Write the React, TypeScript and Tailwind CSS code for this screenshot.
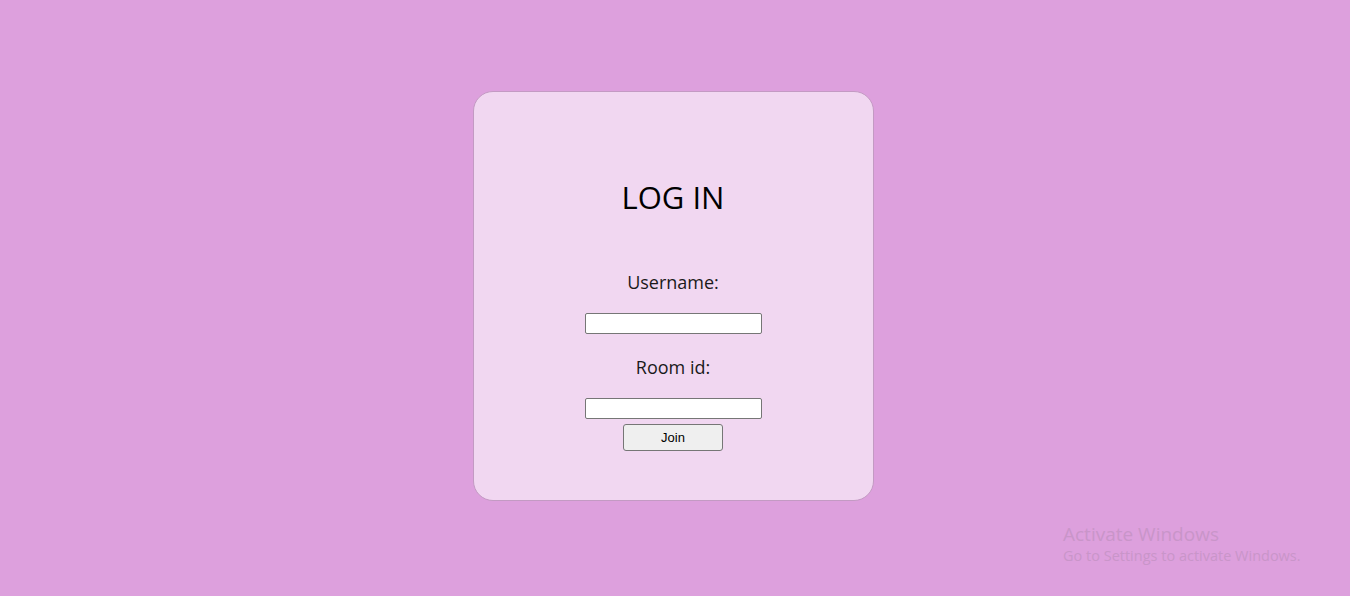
export default function App() {
  return (
    <div
      className="relative flex h-[596px] w-full items-center justify-center bg-[#dda0dd]"
      style={{ fontFamily: '"Open Sans", "Noto Sans", sans-serif' }}
    >
      <div className="mb-[4px] mr-[4px] flex h-[410px] w-[401px] flex-col items-center rounded-[20px] border border-[#c39ac3] bg-[#f1d7f1] pt-[86px]">
        <h1 className="text-[31px] leading-[38px] text-black">LOG IN</h1>
        <label className="mt-[52px] text-[18px] leading-[28px] text-[#1a1a1a]">Username:</label>
        <input
          type="text"
          className="mt-[17px] h-[21px] w-[177px] rounded-[2px] border border-[#767676] bg-white"
        />
        <label className="mt-[19px] text-[18px] leading-[28px] text-[#1a1a1a]">Room id:</label>
        <input
          type="text"
          className="mt-[17px] h-[21px] w-[177px] rounded-[2px] border border-[#767676] bg-white"
        />
        <button
          className="mt-[5px] h-[27px] w-[100px] rounded-[3px] border border-[#767676] bg-[#efefef] text-[13px] text-black"
          style={{ fontFamily: '"Liberation Sans", Arial, sans-serif' }}
        >
          Join
        </button>
      </div>
      <div className="absolute left-[1063px] top-[522px] text-[#c995c9]">
        <p className="text-[19px] leading-[24px]">Activate Windows</p>
        <p className="text-[14.5px] leading-[20px]">Go to Settings to activate Windows.</p>
      </div>
    </div>
  );
}
